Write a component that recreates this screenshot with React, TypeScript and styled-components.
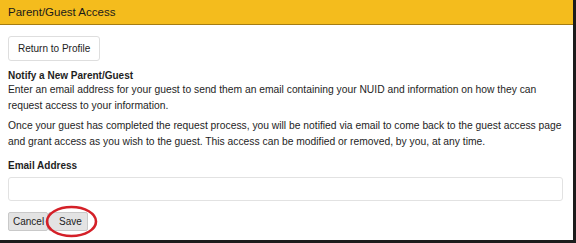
import styled, { createGlobalStyle } from 'styled-components'

const GlobalStyle = createGlobalStyle`
  html, body {
    margin: 0;
    padding: 0;
    background: #ffffff;
  }
  body {
    font-family: "Liberation Sans", Arial, sans-serif;
    color: #1e1e1e;
  }
`

const Frame = styled.div`
  width: 576px;
  height: 243px;
  box-sizing: border-box;
  border-right: 3px solid #1c1c1c;
  border-bottom: 3px solid #1c1c1c;
  background: #ffffff;
  overflow: hidden;
`

const Header = styled.div`
  height: 24px;
  display: flex;
  align-items: center;
  padding-left: 8px;
  background: #f4bc1d;
  border-bottom: 1px solid #a57c12;
  font-size: 11.5px;
  color: #1a1a1a;
`

const Body = styled.div`
  padding: 11px 10px 0 8px;
  font-size: 10px;
`

const Button = styled.button`
  font-family: "Liberation Sans", Arial, sans-serif;
  font-size: 10px;
  color: #222;
  cursor: pointer;
`

const ProfileButton = styled(Button)`
  height: 25px;
  padding: 0 9px;
  background: #ffffff;
  border: 1px solid #dedede;
  border-radius: 3px;
`

const Title = styled.div`
  margin-top: 8px;
  font-weight: bold;
  line-height: 13px;
`

const Paragraph = styled.p<{ $gap: number }>`
  margin: ${p => p.$gap}px 0 0;
  font-size: 10.3px;
  line-height: 16px;
`

const Label = styled.label`
  display: block;
  margin-top: 8px;
  font-weight: bold;
  line-height: 16px;
`

const EmailInput = styled.input`
  display: block;
  box-sizing: border-box;
  width: 100%;
  height: 24px;
  margin-top: 3px;
  border: 1px solid #e2e2e2;
  border-radius: 3px;
  background: #ffffff;
`

const Actions = styled.div`
  display: flex;
  margin-top: 11px;
`

const FormButton = styled(Button)<{ $pad: string; $width: number }>`
  width: ${p => p.$width}px;
  height: 19px;
  padding: ${p => p.$pad};
  text-align: left;
  background: #e3e3e3;
  border: 1px solid #c9c9c9;
  border-radius: 2px;
  white-space: nowrap;
`

const Annotated = styled.span`
  position: relative;
  display: inline-flex;
`

const Ring = styled.svg`
  position: absolute;
  left: -3px;
  top: -7px;
  width: 53px;
  height: 33px;
  pointer-events: none;
  overflow: visible;
`

export default function App() {
  return (
    <Frame>
      <GlobalStyle />
      <Header>Parent/Guest Access</Header>
      <Body>
        <ProfileButton>Return to Profile</ProfileButton>
        <Title>Notify a New Parent/Guest</Title>
        <Paragraph $gap={0}>
          Enter an email address for your guest to send them an email containing your NUID and information on how they can
          request access to your information.
        </Paragraph>
        <Paragraph $gap={4}>
          Once your guest has completed the request process, you will be notified via email to come back to the guest access
          page and grant access as you wish to the guest. This access can be modified or removed, by you, at any time.
        </Paragraph>
        <Label htmlFor="guest-email">Email Address</Label>
        <EmailInput id="guest-email" type="email" />
        <Actions>
          <FormButton $width={40} $pad="0 0 0 4px">Cancel</FormButton>
          <Annotated>
            <FormButton $width={40} $pad="0 0 0 10px">Save</FormButton>
            <Ring viewBox="0 0 53 33">
              <ellipse cx="26.5" cy="16.5" rx="24.5" ry="14.5" fill="none" stroke="#d42028" strokeWidth="2.6" />
            </Ring>
          </Annotated>
        </Actions>
      </Body>
    </Frame>
  )
}
